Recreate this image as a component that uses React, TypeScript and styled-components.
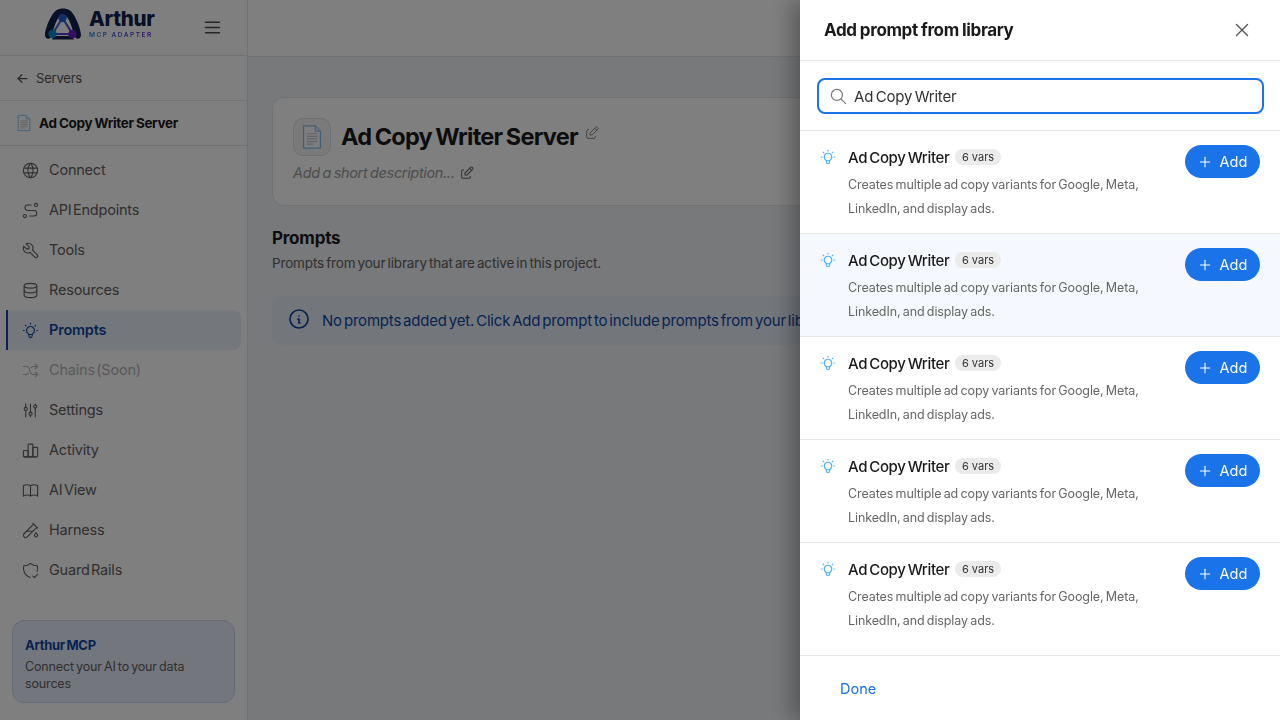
import styled, { createGlobalStyle } from "styled-components";
import {
  TbAdjustments,
  TbArrowLeft,
  TbArrowsShuffle,
  TbBook,
  TbBulb,
  TbChartBar,
  TbDatabase,
  TbEdit,
  TbInfoCircle,
  TbMenu2,
  TbPlus,
  TbRoute,
  TbSearch,
  TbShieldCheck,
  TbTestPipe,
  TbTool,
  TbWorld,
  TbX,
} from "react-icons/tb";

const GlobalStyle = createGlobalStyle`
  html, body {
    margin: 0;
    height: 100%;
    overflow: hidden;
    font-family: "Inter", "Liberation Sans", sans-serif;
    color: #1a1a1a;
  }
  * { box-sizing: border-box; }
`;

const navItems = [
  { label: "Connect", icon: TbWorld },
  { label: "API Endpoints", icon: TbRoute },
  { label: "Tools", icon: TbTool },
  { label: "Resources", icon: TbDatabase },
  { label: "Prompts", icon: TbBulb, active: true },
  { label: "Chains (Soon)", icon: TbArrowsShuffle, disabled: true },
  { label: "Settings", icon: TbAdjustments },
  { label: "Activity", icon: TbChartBar },
  { label: "AI View", icon: TbBook },
  { label: "Harness", icon: TbTestPipe },
  { label: "Guard Rails", icon: TbShieldCheck },
];

const Logo = () => (
  <svg width="38" height="32" viewBox="0 0 38 32">
    <defs>
      <linearGradient id="edge" x1="0" y1="0" x2="1" y2="1">
        <stop offset="0" stopColor="#1e88e5" />
        <stop offset="1" stopColor="#6a1fc2" />
      </linearGradient>
    </defs>
    <path
      d="M1 27 C1 20 8 4 13 2 C16 0 22 0 25 2 C30 4 37 20 37 27 C37 31 33 32 31 29 C28 20 25 7 19 7 C13 7 10 20 7 29 C5 32 1 31 1 27 Z"
      fill="#10204a"
    />
    <path d="M8 31.5 L30 31.5 L28 28 L10 28 Z" fill="#10204a" />
    <path d="M18.5 10 L8.5 26 L28.5 26 Z" fill="none" stroke="url(#edge)" strokeWidth="2" />
    <circle cx="18.5" cy="10" r="4.2" fill="#1f5fd0" />
    <circle cx="8.5" cy="26" r="4.2" fill="#0d86c9" />
    <circle cx="28.5" cy="26" r="4.2" fill="#6a1fc2" />
  </svg>
);

const DocGlyph = ({ size }: { size: number }) => (
  <svg width={size} height={size} viewBox="0 0 20 20">
    <path
      d="M3.5 1.5 H12.5 L16.5 5.5 V18.5 H3.5 Z"
      fill="#fbfcfe"
      stroke="#86bde6"
      strokeWidth="1"
    />
    <path d="M12.5 1.5 V5.5 H16.5" fill="#dcebf7" stroke="#86bde6" strokeWidth="0.8" />
    <path
      d="M6 7.5 H14 M6 9.5 H14 M6 11.5 H14 M6 13.5 H14 M6 15.5 H11"
      stroke="#c0c4c9"
      strokeWidth="0.9"
    />
  </svg>
);

const App = () => {
  return (
    <>
      <GlobalStyle />
      <Shell>
        <Sidebar>
          <Brand>
            <BrandMark>
              <Logo />
              <BrandText>
                <BrandName>Arthur</BrandName>
                <BrandSub>MCP ADAPTER</BrandSub>
              </BrandText>
            </BrandMark>
            <MenuBtn>
              <TbMenu2 size={21} strokeWidth={1.6} />
            </MenuBtn>
          </Brand>
          <BackRow>
            <TbArrowLeft size={15} />
            Servers
          </BackRow>
          <ServerRow>
            <DocGlyph size={18} />
            Ad Copy Writer Server
          </ServerRow>
          <Nav>
            {navItems.map((item) => (
              <NavItem
                key={item.label}
                $active={item.active}
                $disabled={item.disabled}
              >
                <item.icon size={19} strokeWidth={1.4} />
                <span>{item.label}</span>
              </NavItem>
            ))}
          </Nav>
          <PromoCard>
            <PromoTitle>Arthur MCP</PromoTitle>
            <PromoText>Connect your AI to your data sources</PromoText>
          </PromoCard>
        </Sidebar>

        <Main>
          <TopBar />
          <Content>
            <ServerCard>
              <TitleRow>
                <IconBox>
                  <DocGlyph size={26} />
                </IconBox>
                <ServerTitle>Ad Copy Writer Server</ServerTitle>
                <TitleEdit>
                  <TbEdit size={16} strokeWidth={1.5} />
                </TitleEdit>
              </TitleRow>
              <DescRow>
                Add a short description...
                <TbEdit size={16} strokeWidth={1.6} />
              </DescRow>
            </ServerCard>
            <SectionTitle>Prompts</SectionTitle>
            <SectionText>Prompts from your library that are active in this project.</SectionText>
            <Notice>
              <TbInfoCircle size={24} strokeWidth={1.7} />
              No prompts added yet. Click Add prompt to include prompts from your library.
            </Notice>
          </Content>
        </Main>
      </Shell>

      <Backdrop />

      <Drawer>
        <DrawerHead>
          <DrawerTitle>Add prompt from library</DrawerTitle>
          <CloseBtn>
            <TbX size={22} strokeWidth={1.5} />
          </CloseBtn>
        </DrawerHead>
        <SearchWrap>
          <SearchBox>
            <TbSearch size={19} strokeWidth={1.5} />
            <SearchInput readOnly value="Ad Copy Writer" />
          </SearchBox>
        </SearchWrap>
        <List>
          {[0, 1, 2, 3, 4].map((i) => (
            <PromptRow key={i} $hover={i === 1}>
              <PromptIcon>
                <TbBulb size={18} strokeWidth={1.6} />
              </PromptIcon>
              <PromptBody>
                <PromptHead>
                  <PromptName>Ad Copy Writer</PromptName>
                  <VarChip>6 vars</VarChip>
                </PromptHead>
                <PromptDesc>
                  Creates multiple ad copy variants for Google, Meta, LinkedIn, and display ads.
                </PromptDesc>
              </PromptBody>
              <AddBtn>
                <TbPlus size={16} strokeWidth={1.6} />
                Add
              </AddBtn>
            </PromptRow>
          ))}
        </List>
        <DrawerFoot>
          <DoneBtn>Done</DoneBtn>
        </DrawerFoot>
      </Drawer>
    </>
  );
};

const Shell = styled.div`
  display: flex;
  width: 1280px;
  height: 720px;
  overflow: hidden;
  background: #eff2f5;
`;

const Sidebar = styled.aside`
  width: 248px;
  flex-shrink: 0;
  display: flex;
  flex-direction: column;
  background: #fff;
  border-right: 1px solid #e3e5e8;
`;

const Brand = styled.div`
  height: 56px;
  display: flex;
  align-items: center;
  padding: 0 24px 0 44px;
  justify-content: space-between;
  border-bottom: 1px solid #e3e5e8;
`;

const BrandMark = styled.div`
  display: flex;
  align-items: center;
  gap: 7px;
  margin-bottom: 8px;
`;

const BrandText = styled.div`
  display: flex;
  flex-direction: column;
  gap: 3px;
`;

const BrandName = styled.span`
  font-size: 20.5px;
  line-height: 20px;
  font-weight: 800;
  color: #10204a;
  letter-spacing: -0.3px;
`;

const BrandSub = styled.span`
  font-size: 6.5px;
  line-height: 7px;
  font-weight: 600;
  letter-spacing: 1.5px;
  background: linear-gradient(90deg, #1e88e5, #6a1fc2);
  -webkit-background-clip: text;
  background-clip: text;
  color: transparent;
`;

const MenuBtn = styled.div`
  display: flex;
  color: #4a4a4a;
`;

const BackRow = styled.div`
  height: 45px;
  display: flex;
  align-items: center;
  gap: 6px;
  padding-left: 15px;
  font-size: 13px;
  letter-spacing: -0.2px;
  color: #555;
  border-bottom: 1px solid #e3e5e8;
`;

const ServerRow = styled.div`
  height: 45px;
  display: flex;
  align-items: center;
  gap: 6px;
  padding-left: 15px;
  font-size: 13.5px;
  font-weight: 700;
  letter-spacing: -0.35px;
  word-spacing: -0.5px;
  color: #1a1a1a;
  border-bottom: 1px solid #e3e5e8;
`;

const Nav = styled.nav`
  display: flex;
  flex-direction: column;
  padding: 4px 6px 0;
`;

const NavItem = styled.a<{ $active?: boolean; $disabled?: boolean }>`
  height: 40px;
  display: flex;
  align-items: center;
  gap: 9px;
  padding: 0 0 1px 13px;
  font-size: 14.5px;
  font-weight: ${(p) => (p.$active ? 600 : 400)};
  letter-spacing: -0.2px;
  word-spacing: -2.5px;
  color: ${(p) => (p.$active ? "#0d47a1" : p.$disabled ? "#b3b3b3" : "#606060")};
  border-radius: ${(p) => (p.$active ? "0 8px 8px 0" : "0")};
  border-left: 2px solid ${(p) => (p.$active ? "#0d47a1" : "transparent")};
  background: ${(p) => (p.$active ? "#e9eff7" : "transparent")};
  svg {
    flex-shrink: 0;
    margin-bottom: -1px;
  }
`;

const PromoCard = styled.div`
  margin: auto 12px 17px 12px;
  height: 83px;
  padding: 15px 12px 0;
  background: #e6edf8;
  border: 1px solid #c9d7ee;
  border-radius: 12px;
`;

const PromoTitle = styled.div`
  font-size: 13px;
  line-height: 18px;
  font-weight: 700;
  letter-spacing: -0.3px;
  word-spacing: -1px;
  color: #0d47a1;
`;

const PromoText = styled.div`
  margin-top: 4px;
  font-size: 12.5px;
  line-height: 17px;
  letter-spacing: -0.15px;
  word-spacing: -1.2px;
  color: #606060;
`;

const Main = styled.main`
  flex: 1;
  min-width: 0;
  display: flex;
  flex-direction: column;
`;

const TopBar = styled.div`
  height: 57px;
  flex-shrink: 0;
  background: #fff;
  border-bottom: 1px solid #e0e3e6;
`;

const Content = styled.div`
  padding: 40px 24px 0;
`;

const ServerCard = styled.section`
  height: 109px;
  padding: 20px;
  background: #fff;
  border: 1px solid #e3e5e8;
  border-radius: 12px;
`;

const TitleRow = styled.div`
  display: flex;
  align-items: center;
  gap: 10px;
`;

const IconBox = styled.div`
  width: 38px;
  height: 38px;
  display: flex;
  align-items: center;
  justify-content: center;
  background: #f5f5f5;
  border: 1px solid #dcdcdc;
  border-radius: 10px;
`;

const ServerTitle = styled.h1`
  margin: 0;
  font-size: 23.5px;
  line-height: 38px;
  font-weight: 700;
  letter-spacing: -0.75px;
  word-spacing: -1.5px;
  color: #1a1a1a;
`;

const TitleEdit = styled.span`
  display: flex;
  margin: -9px 0 0 -4px;
  color: #8a8a8a;
`;

const DescRow = styled.div`
  display: flex;
  align-items: center;
  gap: 4px;
  margin-top: 7px;
  font-size: 14.5px;
  line-height: 20px;
  font-style: italic;
  letter-spacing: -0.35px;
  word-spacing: -1px;
  color: #999;
  svg {
    color: #666;
  }
`;

const SectionTitle = styled.h2`
  margin: 21px 0 0;
  font-size: 17px;
  line-height: 22px;
  font-weight: 700;
  letter-spacing: -0.2px;
  color: #1a1a1a;
`;

const SectionText = styled.p`
  margin: 4px 0 0;
  font-size: 13.5px;
  line-height: 20px;
  letter-spacing: -0.15px;
  word-spacing: -1.5px;
  color: #606060;
`;

const Notice = styled.div`
  margin-top: 23px;
  height: 49px;
  width: 960px;
  display: flex;
  align-items: center;
  gap: 11px;
  padding-left: 15px;
  font-size: 15px;
  letter-spacing: -0.2px;
  word-spacing: -2px;
  white-space: nowrap;
  color: #0d47a1;
  background: #e6eef9;
  border-radius: 10px;
  svg {
    margin-bottom: 3px;
  }
`;

const Backdrop = styled.div`
  position: fixed;
  inset: 0;
  background: rgba(0, 0, 0, 0.5);
`;

const Drawer = styled.aside`
  position: fixed;
  top: 0;
  right: 0;
  bottom: 0;
  width: 480px;
  display: flex;
  flex-direction: column;
  background: #fff;
  box-shadow: -8px 0 20px rgba(0, 0, 0, 0.3);
`;

const DrawerHead = styled.header`
  height: 61px;
  flex-shrink: 0;
  display: flex;
  align-items: center;
  justify-content: space-between;
  padding: 0 27px 1px 24px;
  border-bottom: 1px solid #e8e8e8;
`;

const DrawerTitle = styled.h2`
  margin: 0;
  font-size: 17px;
  font-weight: 700;
  letter-spacing: -0.35px;
  word-spacing: -0.5px;
  color: #1a1a1a;
`;

const CloseBtn = styled.div`
  display: flex;
  color: #555;
`;

const SearchWrap = styled.div`
  height: 70px;
  flex-shrink: 0;
  padding: 17px 16px 0 17px;
  border-bottom: 1px solid #e8e8e8;
`;

const SearchBox = styled.div`
  height: 36px;
  display: flex;
  align-items: center;
  gap: 6px;
  padding-left: 10px;
  border: 2px solid #1a73e8;
  border-radius: 8px;
  svg {
    flex-shrink: 0;
    color: #777;
  }
`;

const SearchInput = styled.input`
  flex: 1;
  min-width: 0;
  border: 0;
  outline: 0;
  padding: 0;
  font: inherit;
  font-size: 15px;
  letter-spacing: -0.2px;
  word-spacing: -1.5px;
  color: #333;
  background: transparent;
`;

const List = styled.div`
  flex: 1;
  display: flex;
  flex-direction: column;
  border-bottom: 1px solid #e8e8e8;
`;

const PromptRow = styled.div<{ $hover?: boolean }>`
  height: 103px;
  flex-shrink: 0;
  display: flex;
  align-items: flex-start;
  padding: 14px 20px 0 19px;
  background: ${(p) => (p.$hover ? "#f5f9ff" : "#fff")};
  border-bottom: 1px solid #e8e8e8;
  &:last-child {
    border-bottom: 0;
  }
`;

const PromptIcon = styled.div`
  display: flex;
  width: 29px;
  margin-top: 3px;
  color: #4fb3f6;
`;

const PromptBody = styled.div`
  flex: 1;
  min-width: 0;
`;

const PromptHead = styled.div`
  display: flex;
  align-items: center;
  gap: 6px;
  height: 24px;
`;

const PromptName = styled.span`
  font-size: 15px;
  font-weight: 500;
  letter-spacing: -0.35px;
  word-spacing: -1.5px;
  color: #1a1a1a;
`;

const VarChip = styled.span`
  height: 16px;
  padding: 0 6.5px;
  font-size: 11px;
  line-height: 16px;
  color: #333;
  background: #ebebeb;
  border-radius: 8px;
`;

const PromptDesc = styled.p`
  margin: 4px 0 0;
  width: 310px;
  font-size: 12.5px;
  line-height: 24px;
  letter-spacing: -0.1px;
  word-spacing: -1.1px;
  color: #666;
`;

const AddBtn = styled.button`
  width: 75px;
  height: 33px;
  flex-shrink: 0;
  display: flex;
  align-items: center;
  justify-content: center;
  gap: 7px;
  padding: 0 1px 0 0;
  border: 0;
  border-radius: 17px;
  font: inherit;
  font-size: 14.5px;
  font-weight: 400;
  color: #fff;
  background: #1a73e8;
`;

const DrawerFoot = styled.footer`
  height: 64px;
  flex-shrink: 0;
  display: flex;
  align-items: center;
  padding: 1px 0 0 40px;
`;

const DoneBtn = styled.button`
  padding: 0;
  border: 0;
  font: inherit;
  font-size: 14.5px;
  font-weight: 400;
  color: #1a73e8;
  background: transparent;
`;

export default App;
